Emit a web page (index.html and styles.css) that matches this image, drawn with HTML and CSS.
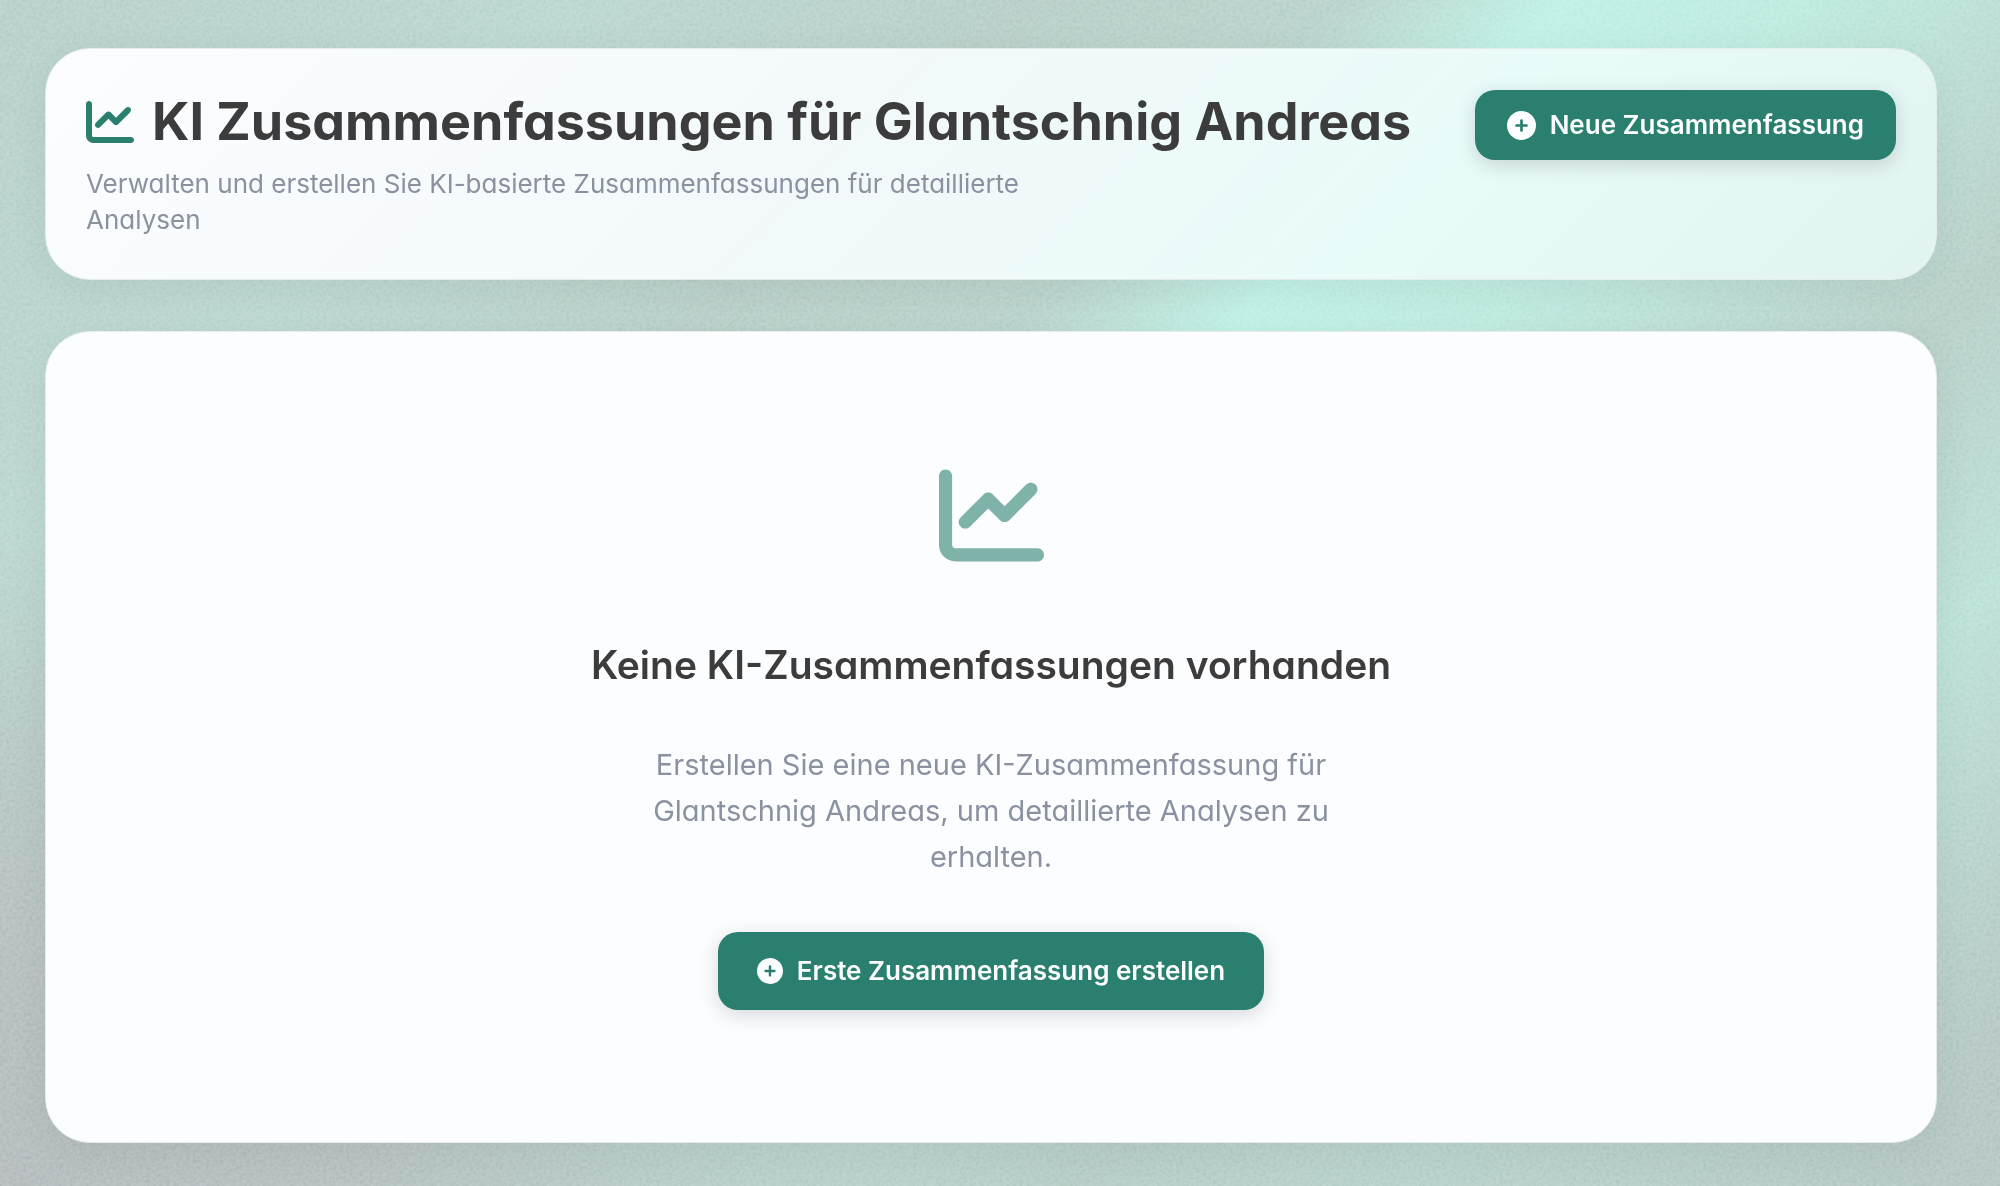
FILE: index.html
```html
<!DOCTYPE html>
<html lang="de">
<head>
  <meta charset="UTF-8" />
  <meta name="viewport" content="width=device-width, initial-scale=1.0"/>
  <title>KI Zusammenfassungen</title>
  <link rel="stylesheet" href="styles.css">
</head>
<body>

  <!-- Shared icons -->
  <svg class="icon-defs" aria-hidden="true">
    <symbol id="icon-chart" viewBox="0 0 512 512">
      <path d="M64 64c0-17.700-14.300-32-32-32S0 46.300 0 64V400c0 44.200 35.800 80 80 80H480c17.700 0 32-14.300 32-32s-14.300-32-32-32H80c-8.800 0-16-7.200-16-16V64zm406.600 86.600c12.500-12.500 12.500-32.800 0-45.300s-32.800-12.500-45.300 0L320 210.700l-57.400-57.400c-12.500-12.500-32.800-12.500-45.300 0l-112 112c-12.500 12.500-12.500 32.800 0 45.300s32.800 12.500 45.300 0L240 221.300l57.400 57.400c12.500 12.500 32.800 12.500 45.300 0l128-128z"/>
    </symbol>
    <symbol id="icon-plus" viewBox="0 0 512 512">
      <path d="M256 512A256 256 0 1 0 256 0a256 256 0 1 0 0 512zM232 344V280H168c-13.300 0-24-10.700-24-24s10.700-24 24-24h64V168c0-13.300 10.700-24 24-24s24 10.700 24 24v64h64c13.300 0 24 10.700 24 24s-10.700 24-24 24H280v64c0 13.300-10.700 24-24 24s-24-10.700-24-24z"/>
    </symbol>
  </svg>

  <!-- Background grain -->
  <svg class="grain" aria-hidden="true">
    <filter id="noise" x="0" y="0" width="100%" height="100%" color-interpolation-filters="sRGB">
      <feTurbulence type="fractalNoise" baseFrequency="0.3" numOctaves="3"/>
      <feColorMatrix values="2 0 0 0 -0.5  2 0 0 0 -0.5  2 0 0 0 -0.5  0 0 0 0 1"/>
    </filter>
    <rect width="100%" height="100%" filter="url(#noise)"/>
  </svg>

  <main class="container">
    <header class="page-header">
      <div class="header-text">
        <h1><svg class="title-icon" aria-hidden="true"><use href="#icon-chart"/></svg>KI Zusammenfassungen für Glantschnig Andreas</h1>
        <p>Verwalten und erstellen Sie KI-basierte Zusammenfassungen für detaillierte Analysen</p>
      </div>
      <button type="button" class="btn"><svg class="btn-icon" aria-hidden="true"><use href="#icon-plus"/></svg>Neue Zusammenfassung</button>
    </header>

    <section class="empty-state">
      <svg class="empty-icon" aria-hidden="true"><use href="#icon-chart"/></svg>
      <h2>Keine KI-Zusammenfassungen vorhanden</h2>
      <p>Erstellen Sie eine neue KI-Zusammenfassung für Glantschnig Andreas, um detaillierte Analysen zu erhalten.</p>
      <button type="button" class="btn btn-large"><svg class="btn-icon" aria-hidden="true"><use href="#icon-plus"/></svg>Erste Zusammenfassung erstellen</button>
    </section>
  </main>

</body>
</html>
```

FILE: styles.css
```css
* {
  box-sizing: border-box;
}

body {
  font-family: Inter, "Liberation Sans", sans-serif;
  font-feature-settings: "cv11";
  margin: 0;
  min-height: 100vh;
  color: #3c3c3c;
  background-color: #bcd2cc;
  background-image:
    radial-gradient(ellipse 45% 55% at 0% 100%, #b9bfc1, #b9c4c4 40%, rgba(185, 196, 196, 0) 100%),
    linear-gradient(to top, rgba(185, 205, 200, 0.7), rgba(185, 205, 200, 0) 30%),
    linear-gradient(135deg, #bcd2cc 0%, #bedad3 18%, #bcd1cb 32%, #bcd5ce 42%, #c3f1e7 49%, #c1ebe1 57%, #bbd2cb 71%, #bfe3da 81%, #b9c7c6 97%);
}

.icon-defs {
  position: absolute;
  width: 0;
  height: 0;
}

.grain {
  position: fixed;
  inset: 0;
  width: 100%;
  height: 100%;
  opacity: 0.16;
  mix-blend-mode: soft-light;
  pointer-events: none;
}

.container {
  position: relative;
  display: flex;
  flex-direction: column;
  gap: 51px;
  min-height: 100vh;
  padding: 48px 63px 43px 45px;
}

.page-header,
.empty-state {
  border: 1px solid #e6ecec;
  border-radius: 45px;
  box-shadow: 0 10px 40px rgba(0, 0, 0, 0.06);
}

.page-header {
  display: flex;
  justify-content: space-between;
  align-items: flex-start;
  gap: 40px;
  padding: 41px 40px;
  background: linear-gradient(135deg, #fcfdff 0%, #f3f9fb 42%, #e8fbf9 72%, #e2f4f1 100%);
}

h1 {
  display: flex;
  align-items: center;
  gap: 18px;
  margin: 0 0 12px;
  font-size: 52px;
  font-weight: 700;
  line-height: 64px;
}

.title-icon {
  width: 48px;
  height: 48px;
  fill: #2a7f6f;
}

.page-header p {
  max-width: 960px;
  margin: 0;
  color: #8a91a0;
  font-size: 26px;
  line-height: 36px;
}

.btn {
  display: inline-flex;
  align-items: center;
  gap: 14px;
  flex-shrink: 0;
  padding: 19px 32px;
  border: none;
  border-radius: 20px;
  background-color: #2a7f6f;
  box-shadow: 0 5px 20px rgba(0, 0, 0, 0.15);
  color: #fcfdff;
  font-family: inherit;
  font-size: 26px;
  font-weight: 600;
  line-height: 32px;
  cursor: pointer;
}

.btn:hover {
  background-color: #236b5e;
}

.btn-icon {
  width: 29px;
  height: 29px;
  fill: currentColor;
}

.btn-large {
  padding: 23px 39px;
}

.btn-large .btn-icon {
  width: 26px;
  height: 26px;
}

.empty-state {
  display: flex;
  flex: 1;
  flex-direction: column;
  align-items: center;
  justify-content: center;
  padding: 40px 40px 42px;
  background-color: #fcfdff;
  text-align: center;
}

.empty-icon {
  width: 105px;
  height: 105px;
  margin-bottom: 73px;
  fill: #7fb2a9;
}

h2 {
  margin: 0 0 53px;
  font-size: 39px;
  font-weight: 600;
  line-height: 48px;
}

.empty-state p {
  max-width: 720px;
  margin: 0 0 52px;
  color: #8a91a0;
  font-size: 29px;
  line-height: 46px;
}
```
